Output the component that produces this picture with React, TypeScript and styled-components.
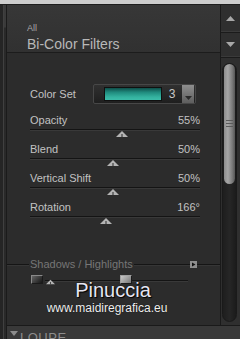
import styled, {createGlobalStyle} from 'styled-components';

const GlobalStyle = createGlobalStyle`
  html, body {
    margin: 0;
    padding: 0;
    background: #2b2b2b;
  }
`;

type SliderItem = {label: string; value: string; pct: number};

const sliders: SliderItem[] = [
  {label: 'Opacity', value: '55%', pct: 55},
  {label: 'Blend', value: '50%', pct: 50},
  {label: 'Vertical Shift', value: '50%', pct: 50},
  {label: 'Rotation', value: '166°', pct: 46},
];

const Marker = ({size = 12}: {size?: number}) => (
  <svg width={size} height={6} viewBox="0 0 12 6">
    <polygon points="0,6 6,0 12,6" fill="#b4b4b4" />
    <line x1="6" y1="3" x2="6" y2="6" stroke="#2a2a2a" strokeWidth="1" />
  </svg>
);

const SectionArrow = () => (
  <svg width="7" height="7" viewBox="0 0 7 7">
    <rect x="0" y="0" width="7" height="7" fill="#8e8e8e" />
    <polygon points="2,1.5 5.5,3.5 2,5.5" fill="#111" />
  </svg>
);

const Section = ({title}: {title: string}) => (
  <SectionRow>
    <SectionLine $w={22} />
    <SectionTitle>{title}</SectionTitle>
    <SectionLine />
    <SectionArrow />
    <SectionLine $w={23} />
  </SectionRow>
);

const App = () => {
  return (
    <>
      <GlobalStyle />
      <Root>
        <TopStrip />
        <Main>
          <LeftRail />
          <RightCol>
            <Upper>
              <Panel>
                <Header>
                  <Crumb>All</Crumb>
                  <Title>Bi-Color Filters</Title>
                </Header>
                <Controls>
                  <ColorRow>
                    <Label $w={63}>Color Set</Label>
                    <Dropdown>
                      <Swatch />
                      <SetNum>3</SetNum>
                      <DropButton>
                        <svg width="7" height="4" viewBox="0 0 7 4">
                          <polygon points="0,0 7,0 3.5,4" fill="#2a2a2a" />
                        </svg>
                      </DropButton>
                    </Dropdown>
                  </ColorRow>
                  {sliders.map((s) => (
                    <Slider key={s.label}>
                      <SliderHead>
                        <Label>{s.label}</Label>
                        <Value>{s.value}</Value>
                      </SliderHead>
                      <Track>
                        <MarkerSlot style={{left: `calc(${s.pct}% - 8px)`}}>
                          <Marker />
                        </MarkerSlot>
                      </Track>
                    </Slider>
                  ))}
                </Controls>
                <Section title="Shadows / Highlights" />
                <ShadowRow>
                  <ToneSwatch />
                  <ToneTrack>
                    <MarkerSlot style={{left: '1px', top: '-1px'}}>
                      <Marker size={9} />
                    </MarkerSlot>
                    <ToneSwatch $light style={{position: 'absolute', left: '75px', top: '-5px'}} />
                  </ToneTrack>
                </ShadowRow>
                <Section title="Control Points" />
              </Panel>
              <Scroll>
                <ScrollButton $h={27}>
                  <svg width="9" height="5" viewBox="0 0 9 5">
                    <polygon points="0,5 4.5,0 9,5" fill="#a8a8a8" />
                  </svg>
                </ScrollButton>
                <ScrollButton $h={24}>
                  <svg width="9" height="5" viewBox="0 0 9 5">
                    <polygon points="0,0 9,0 4.5,5" fill="#a8a8a8" />
                  </svg>
                </ScrollButton>
                <ScrollTrack>
                  <Thumb>
                    <Grip />
                    <Grip />
                    <Grip />
                  </Thumb>
                </ScrollTrack>
              </Scroll>
            </Upper>
            <Loupe>
              <svg width="8" height="5" viewBox="0 0 8 5">
                <polygon points="0,0 8,0 4,5" fill="#8c8c8c" />
              </svg>
              <LoupeText>LOUPE</LoupeText>
            </Loupe>
          </RightCol>
        </Main>
        <Watermark>
          <WmName>Pinuccia</WmName>
          <WmUrl>www.maidiregrafica.eu</WmUrl>
        </Watermark>
      </Root>
    </>
  );
};

export default App;

const Root = styled.div`
  position: relative;
  width: 240px;
  height: 339px;
  overflow: hidden;
  display: flex;
  flex-direction: column;
  font-family: "Liberation Sans", Arial, sans-serif;
`;

const TopStrip = styled.div`
  height: 4px;
  background: #cdcdcd;
  border-bottom: 1px solid #1e1e1e;
`;

const Main = styled.div`
  flex: 1;
  display: flex;
  min-height: 0;
`;

const LeftRail = styled.div`
  width: 7px;
  background: linear-gradient(#3a3a3a 0, #3a3a3a 22px, #292929 23px);
  border-left: 3px solid #252525;
  box-sizing: border-box;
  box-shadow: inset 1px 0 #404040, inset -1px 0 #1b1b1b;
`;

const RightCol = styled.div`
  flex: 1;
  display: flex;
  flex-direction: column;
  min-width: 0;
`;

const Upper = styled.div`
  height: 320px;
  display: flex;
`;

const Panel = styled.div`
  flex: 1;
  display: flex;
  flex-direction: column;
  background: #2c2c2c;
  min-width: 0;
`;

const Header = styled.div`
  height: 53px;
  box-sizing: border-box;
  padding: 18px 0 0 20px;
  background: linear-gradient(#373737, #313131);
  border-bottom: 1px solid #1c1c1c;
`;

const Crumb = styled.div`
  font-size: 9px;
  line-height: 10px;
  color: #a8a8a8;
`;

const Title = styled.div`
  margin-top: 3px;
  font-size: 14px;
  line-height: 16px;
  color: #b8b8b8;
`;

const Controls = styled.div`
  display: flex;
  flex-direction: column;
  padding: 31px 20px 0 23px;
`;

const ColorRow = styled.div`
  display: flex;
  align-items: center;
  height: 20px;
  margin-bottom: 9px;
`;

const Label = styled.div<{$w?: number}>`
  width: ${(p) => (p.$w ? `${p.$w}px` : 'auto')};
  font-size: 11px;
  line-height: 14px;
  color: #c2c2c2;
`;

const Value = styled.div`
  font-size: 11px;
  line-height: 14px;
  color: #c2c2c2;
`;

const Dropdown = styled.div`
  width: 103px;
  height: 20px;
  box-sizing: border-box;
  display: flex;
  align-items: center;
  padding: 0 1px 0 10px;
  background: linear-gradient(#303030, #1f1f1f);
  border: 1px solid #474747;
  border-radius: 2px;
`;

const Swatch = styled.div`
  width: 58px;
  height: 14px;
  box-sizing: border-box;
  border: 1px solid #101010;
  background: linear-gradient(#0f4e49, #1f8a7d 35%, #34b29f 75%, #3cbca9);
`;

const SetNum = styled.div`
  flex: 1;
  text-align: center;
  font-size: 12px;
  color: #c8c8c8;
`;

const DropButton = styled.div`
  width: 12px;
  height: 18px;
  display: flex;
  align-items: flex-end;
  justify-content: center;
  padding-bottom: 3px;
  box-sizing: border-box;
  background: linear-gradient(#8e8e8e, #5e5e5e);
`;

const Slider = styled.div`
  height: 29px;
  display: flex;
  flex-direction: column;
`;

const SliderHead = styled.div`
  display: flex;
  justify-content: space-between;
  height: 14px;
`;

const Track = styled.div`
  position: relative;
  margin-top: 2px;
  height: 1px;
  background: #141414;
  box-shadow: 0 1px #393939;
`;

const MarkerSlot = styled.div`
  position: absolute;
  top: 2px;
  line-height: 0;
`;

const SectionRow = styled.div`
  display: flex;
  align-items: center;
  height: 12px;
  margin-top: 29px;
`;

const SectionLine = styled.div<{$w?: number}>`
  ${(p) => (p.$w ? `width: ${p.$w}px;` : 'flex: 1;')}
  height: 1px;
  background: #151515;
  box-shadow: 0 1px #363636;
`;

const SectionTitle = styled.div`
  padding: 0 1px;
  font-size: 11px;
  line-height: 12px;
  color: #767676;
`;

const ShadowRow = styled.div`
  display: flex;
  align-items: center;
  height: 12px;
  margin: 5px 0 17px;
  padding: 0 32px 0 24px;
`;

const ToneSwatch = styled.div<{$light?: boolean}>`
  width: 12px;
  height: 9px;
  box-sizing: border-box;
  border: 1px solid ${(p) => (p.$light ? '#a0a0a0' : '#8a8a8a')};
  border-right-color: #1a1a1a;
  border-bottom-color: #1a1a1a;
  background: ${(p) =>
    p.$light ? 'linear-gradient(135deg, #c8c8c8, #777)' : 'linear-gradient(135deg, #666, #151515)'};
`;

const ToneTrack = styled.div`
  position: relative;
  flex: 1;
  height: 1px;
  margin-left: 2px;
  margin-top: 2px;
  background: #141414;
  box-shadow: 0 1px #393939;
`;

const Scroll = styled.div`
  width: 20px;
  display: flex;
  flex-direction: column;
  background: #2f2f2f;
  border-left: 1px solid #1a1a1a;
  box-sizing: border-box;
`;

const ScrollButton = styled.div<{$h: number}>`
  height: ${(p) => p.$h}px;
  display: flex;
  align-items: center;
  justify-content: center;
  border-bottom: 1px solid #1b1b1b;
  box-shadow: inset 0 -1px #3a3a3a;
  &:last-of-type {
    border-bottom: none;
    box-shadow: none;
  }
`;

const ScrollTrack = styled.div`
  margin: 5px 0 3px 1px;
  width: 15px;
  height: 260px;
  box-sizing: border-box;
  padding: 0 1px;
  border: 1px solid #1a1a1a;
  border-radius: 8px;
  background: linear-gradient(90deg, #1e1e1e, #262626 50%, #1b1b1b);
`;

const Thumb = styled.div`
  width: 11px;
  height: 120px;
  border-radius: 6px;
  background: linear-gradient(90deg, #8c8c8c, #a6a6a6 35%, #7a7a7a 75%, #555);
  display: flex;
  flex-direction: column;
  align-items: center;
  justify-content: center;
  gap: 2px;
`;

const Grip = styled.div`
  width: 7px;
  height: 1px;
  background: #5a5a5a;
`;

const Loupe = styled.div`
  height: 14px;
  box-sizing: border-box;
  overflow: hidden;
  border-top: 1px solid #1a1a1a;
  background: #393939;
  display: flex;
  align-items: flex-start;
  gap: 2px;
  padding: 5px 0 0 3px;
`;

const LoupeText = styled.span`
  font-size: 13px;
  line-height: 13px;
  color: #8c8c8c;
  letter-spacing: 0.5px;
`;

const Watermark = styled.div`
  position: absolute;
  left: 47px;
  top: 279px;
  width: 120px;
  display: flex;
  flex-direction: column;
  align-items: center;
  pointer-events: none;
`;

const WmName = styled.div`
  margin-left: 12px;
  font-size: 20px;
  line-height: 22px;
  color: #e6e6f2;
  text-shadow: 0 0 1px #000, 1px 1px 1px #000;
`;

const WmUrl = styled.div`
  font-size: 12px;
  line-height: 14px;
  color: #f0f0f0;
  text-shadow: 0 0 1px #000;
`;
